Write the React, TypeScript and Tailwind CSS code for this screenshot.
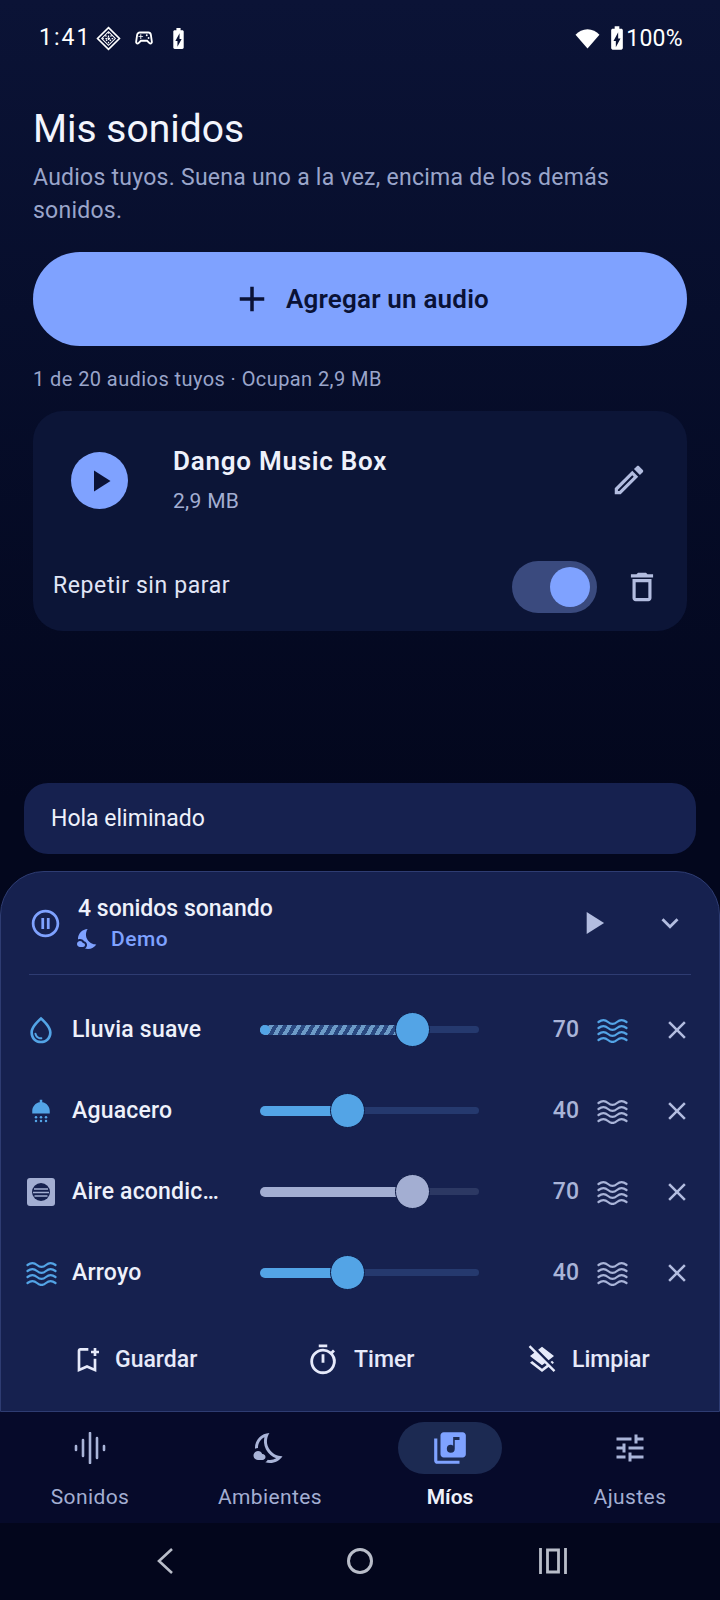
import type { ReactNode } from "react";
import {
  MdAdd,
  MdBatteryChargingFull,
  MdClose,
  MdKeyboardArrowDown,
  MdLayersClear,
  MdLibraryMusic,
  MdNightsStay,
  MdOutlineBookmarkAdd,
  MdOutlineDelete,
  MdOutlineEdit,
  MdOutlineNightsStay,
  MdOutlinePauseCircle,
  MdOutlineSportsEsports,
  MdOutlineTimer,
  MdOutlineTune,
  MdOutlineWaterDrop,
  MdPlayArrow,
  MdShower,
} from "react-icons/md";

function Waves({ className }: { className?: string }) {
  const rows = [4, 10, 16, 22];
  return (
    <svg viewBox="0 0 30 26" className={className} fill="none" stroke="currentColor" strokeWidth="2.2" strokeLinecap="round">
      {rows.map((y) => (
        <path key={y} d={`M1 ${y + 1}c3.5-2.6 6.5-2.6 9.5 0s6 2.6 9 0 6-2.6 9.5 0`} />
      ))}
    </svg>
  );
}

function AcIcon() {
  return (
    <svg viewBox="0 0 28 28" className="size-[28px]">
      <rect width="28" height="28" rx="3" fill="#a3aed2" />
      <circle cx="14" cy="14" r="9" fill="#16214f" />
      <path d="M7 11h14M6 14.5h16M7.5 18h13" stroke="#a3aed2" strokeWidth="1.5" />
    </svg>
  );
}

function EqIcon() {
  return (
    <svg viewBox="0 0 32 32" className="size-[32px]" fill="none" stroke="currentColor" strokeWidth="2.6" strokeLinecap="round">
      <path d="M2 14v4M9 8v16M16 1v30M23 6v20M30 14v4" />
    </svg>
  );
}

function StatusDiamond() {
  return (
    <svg viewBox="0 0 24 24" className="size-[25px]" fill="none" stroke="#fff">
      <path d="M12 1.500 22.500 12 12 22.500 1.500 12Z" strokeWidth="1.6" />
      <path d="M12 5.500 18.500 12 12 18.500 5.500 12Z" strokeWidth="1" />
      <path d="M9 9l6 6M15 9l-6 6M12 6v12M6 12h12" strokeWidth="1.2" strokeDasharray="1.5 1.5" />
    </svg>
  );
}

function StatusBar() {
  return (
    <div className="flex h-[76px] shrink-0 items-center justify-between pl-[39px] pr-[37px] text-white">
      <div className="flex items-center">
        <span className="w-[57px] pt-[1px] text-[23px] tracking-[2px]">1:41</span>
        <StatusDiamond />
        <MdOutlineSportsEsports className="ml-[12px] size-[22px]" />
        <MdBatteryChargingFull className="ml-[11px] size-[25px]" />
      </div>
      <div className="flex items-center">
        <svg viewBox="0 0 24 20" className="h-[21px] w-[25px]" fill="#fff">
          <path d="M12 19.500 0.500 6.500C3.500 3 7.500 1 12 1s8.500 2 11.500 5.500Z" />
        </svg>
        <MdBatteryChargingFull className="ml-[3px] size-[28px] -mr-[5px]" />
        <span className="pt-[3px] text-[23px] tracking-[0.3px]">100%</span>
      </div>
    </div>
  );
}

function Track({ value, color, rest, hatched }: { value: number; color: string; rest: string; hatched?: boolean }) {
  const width = value * 2.19 - 9;
  return (
    <div className="flex w-[219px] items-center">
      {hatched && <div className="z-10 -mr-[10px] size-[10px] shrink-0 rounded-full bg-[#53a4e6]" />}
      <div
        className={
          hatched
            ? "h-[10px] rounded-l-full bg-[repeating-linear-gradient(120deg,#6d9bc8_0px,#6d9bc8_4px,#2a4880_4px,#2a4880_8px)]"
            : "h-[10px] rounded-l-full"
        }
        style={hatched ? { width: `${width}px` } : { width: `${width}px`, backgroundColor: color }}
      />
      <div className="z-10 -ml-[9px] size-[35px] shrink-0 rounded-full border border-[#0e1a45]" style={{ backgroundColor: color }} />
      <div className="-ml-[9px] h-[7px] flex-1 rounded-r-full" style={{ backgroundColor: rest }} />
    </div>
  );
}

type Row = {
  name: string;
  value: number;
  icon: ReactNode;
  color: string;
  rest: string;
  hatched?: boolean;
  active?: boolean;
};

const rows: Row[] = [
  { name: "Lluvia suave", value: 70, icon: <MdOutlineWaterDrop className="size-[32px] text-[#53a4e6]" />, color: "#53a4e6", rest: "#25396e", hatched: true, active: true },
  { name: "Aguacero", value: 40, icon: <MdShower className="size-[30px] text-[#53a4e6]" />, color: "#53a4e6", rest: "#25396e" },
  { name: "Aire acondic…", value: 70, icon: <AcIcon />, color: "#a3aed2", rest: "#2c3863" },
  { name: "Arroyo", value: 40, icon: <Waves className="h-[26px] w-[31px] text-[#53a4e6]" />, color: "#53a4e6", rest: "#25396e" },
];

function SoundRow({ row }: { row: Row }) {
  return (
    <div className="flex h-[81px] items-center">
      <div className="flex w-[59px] shrink-0 justify-center pl-[2px] pr-[3px]">{row.icon}</div>
      <span className="w-[189px] shrink-0 pl-[1px] pt-[2px] text-[23px] font-medium tracking-[0.2px] text-[#eef1fb]">{row.name}</span>
      <Track value={row.value} color={row.color} rest={row.rest} hatched={row.hatched} />
      <span className="w-[100px] pt-[2px] text-right text-[23px] font-medium text-[#a9b4d8]">{row.value}</span>
      <Waves className={row.active ? "ml-[18px] h-[26px] w-[31px] text-[#53a4e6]" : "ml-[18px] h-[26px] w-[31px] text-[#a9b4d8]"} />
      <MdClose className="ml-[34px] size-[30px] text-[#b3bde0]" />
    </div>
  );
}

function PanelButton({ icon, label, className }: { icon: ReactNode; label: string; className: string }) {
  return (
    <div className={`flex items-center text-[#e6eafa] ${className}`}>
      {icon}
      <span className="text-[23px] font-medium">{label}</span>
    </div>
  );
}

function NavItem({ icon, label, active }: { icon: ReactNode; label: string; active?: boolean }) {
  return (
    <div className="flex w-[180px] flex-col items-center">
      <div className={active ? "flex h-[52px] w-[104px] items-center justify-center rounded-full bg-[#1c2a52] text-[#7fa2ff]" : "flex h-[52px] w-[104px] items-center justify-center text-[#a9b4d8]"}>
        {icon}
      </div>
      <span className={active ? "mt-[8px] text-[21px] font-semibold leading-[30px] text-[#eef1fb]" : "mt-[8px] text-[21px] leading-[30px] tracking-[0.4px] text-[#a3aed2]"}>
        {label}
      </span>
    </div>
  );
}

export default function App() {
  return (
    <div className="flex h-[1600px] w-[720px] flex-col overflow-hidden bg-gradient-to-b from-[#0b1336] to-[#03071d] to-50% font-['Roboto',sans-serif] text-white">
      <StatusBar />

      <main className="flex-1 px-[33px]">
        <h1 className="mt-[27px] text-[39px] leading-[52px] text-[#f3f5fd]">Mis sonidos</h1>
        <p className="mt-[6px] text-[23px] leading-[33px] tracking-[0.25px] text-[#9aa5ca]">
          Audios tuyos. Suena uno a la vez, encima de los demás sonidos.
        </p>

        <button className="mt-[25px] flex h-[94px] w-full items-center justify-center rounded-full bg-[#7fa2ff] text-[#0a1236]">
          <MdAdd className="size-[42px]" />
          <span className="ml-[13px] text-[26px] font-semibold tracking-[0.2px]">Agregar un audio</span>
        </button>

        <p className="mt-[19px] text-[20px] leading-[28px] tracking-[0.42px] text-[#9aa5ca]">1 de 20 audios tuyos · Ocupan 2,9 MB</p>

        <section className="mt-[18px] h-[220px] rounded-[30px] bg-[#0c1537]">
          <div className="flex items-start pl-[38px] pr-[39px] pt-[41px]">
            <div className="flex size-[57px] shrink-0 items-center justify-center rounded-full bg-[#7fa2ff]">
              <MdPlayArrow className="size-[36px] text-[#0a1236]" />
            </div>
            <div className="ml-[45px] flex-1">
              <div className="-mt-[8px] text-[26px] font-semibold leading-[34px] tracking-[0.75px] text-[#eef1fb]">Dango Music Box</div>
              <div className="mt-[9px] text-[21px] leading-[28px] tracking-[0.3px] text-[#a3aed2]">2,9 MB</div>
            </div>
            <MdOutlineEdit className="mt-[9px] size-[38px] text-[#b3bde0]" />
          </div>
          <div className="mt-[46px] flex items-center pl-[20px] pr-[26px]">
            <span className="-mt-[2px] flex-1 text-[23px] tracking-[0.6px] text-[#e0e5f6]">Repetir sin parar</span>
            <div className="flex h-[52px] w-[85px] items-center justify-end rounded-full bg-[#3a4a7e] pr-[7px]">
              <div className="size-[40px] rounded-full bg-[#7fa2ff]" />
            </div>
            <MdOutlineDelete className="ml-[26px] size-[38px] text-[#b3bde0]" />
          </div>
        </section>
      </main>

      <div className="mx-[24px] mb-[17px] flex h-[71px] shrink-0 items-center rounded-[24px] bg-[#16214f] px-[27px] pt-[2px] text-[23px] text-[#eef1fb]">
        Hola eliminado
      </div>

      <section className="h-[541px] shrink-0 rounded-t-[44px] border border-[#2e3c72] bg-[#16214f] pl-[11px] pr-[14px]">
        <div className="ml-[17px] mr-[14px] flex h-[103px] items-center border-b border-[#2e3c72]">
          <MdOutlinePauseCircle className="size-[33px] text-[#7fa2ff]" />
          <div className="ml-[16px] flex-1 pt-[2px]">
            <div className="text-[23px] font-medium leading-[30px] text-[#eef1fb]">4 sonidos sonando</div>
            <div className="flex items-center">
              <MdNightsStay className="-ml-[2px] size-[24px] text-[#7fa2ff]" />
              <span className="ml-[11px] text-[21px] font-medium leading-[30px] tracking-[0.5px] text-[#7fa2ff]">Demo</span>
            </div>
          </div>
          <MdPlayArrow className="size-[38px] text-[#b3bde0]" />
          <MdKeyboardArrowDown className="ml-[41px] mr-[4px] size-[34px] text-[#b3bde0]" />
        </div>
        <div className="pt-[14px]">
          {rows.map((row) => (
            <SoundRow key={row.name} row={row} />
          ))}
        </div>
        <div className="mt-[30px] flex items-center">
          <PanelButton className="ml-[59px] w-[235px] gap-[12px]" icon={<MdOutlineBookmarkAdd className="size-[32px]" />} label="Guardar" />
          <PanelButton className="w-[220px] gap-[14px]" icon={<MdOutlineTimer className="size-[34px]" />} label="Timer" />
          <PanelButton className="gap-[14px]" icon={<MdLayersClear className="size-[32px]" />} label="Limpiar" />
        </div>
      </section>

      <nav className="flex h-[111px] shrink-0 bg-[#060a2a] pt-[10px]">
        <NavItem label="Sonidos" icon={<EqIcon />} />
        <NavItem label="Ambientes" icon={<MdOutlineNightsStay className="size-[36px]" />} />
        <NavItem label="Míos" active icon={<MdLibraryMusic className="size-[38px]" />} />
        <NavItem label="Ajustes" icon={<MdOutlineTune className="size-[36px]" />} />
      </nav>

      <div className="flex h-[77px] shrink-0 items-center bg-[#03061c] pb-[1px] text-[#b9bdc9]">
        <svg viewBox="0 0 20 28" className="ml-[155px] h-[28px] w-[20px]" fill="none" stroke="currentColor" strokeWidth="2.6">
          <path d="M17 2 4 14l13 12" />
        </svg>
        <svg viewBox="0 0 28 28" className="ml-[171px] size-[28px]" fill="none" stroke="currentColor" strokeWidth="3">
          <circle cx="14" cy="14" r="11.500" />
        </svg>
        <svg viewBox="0 0 28 26" className="ml-[165px] h-[26px] w-[28px]" fill="none" stroke="currentColor" strokeWidth="2.800">
          <path d="M1.500 0v26M26.500 0v26M8.500 2h11v22h-11Z" />
        </svg>
      </div>
    </div>
  );
}
